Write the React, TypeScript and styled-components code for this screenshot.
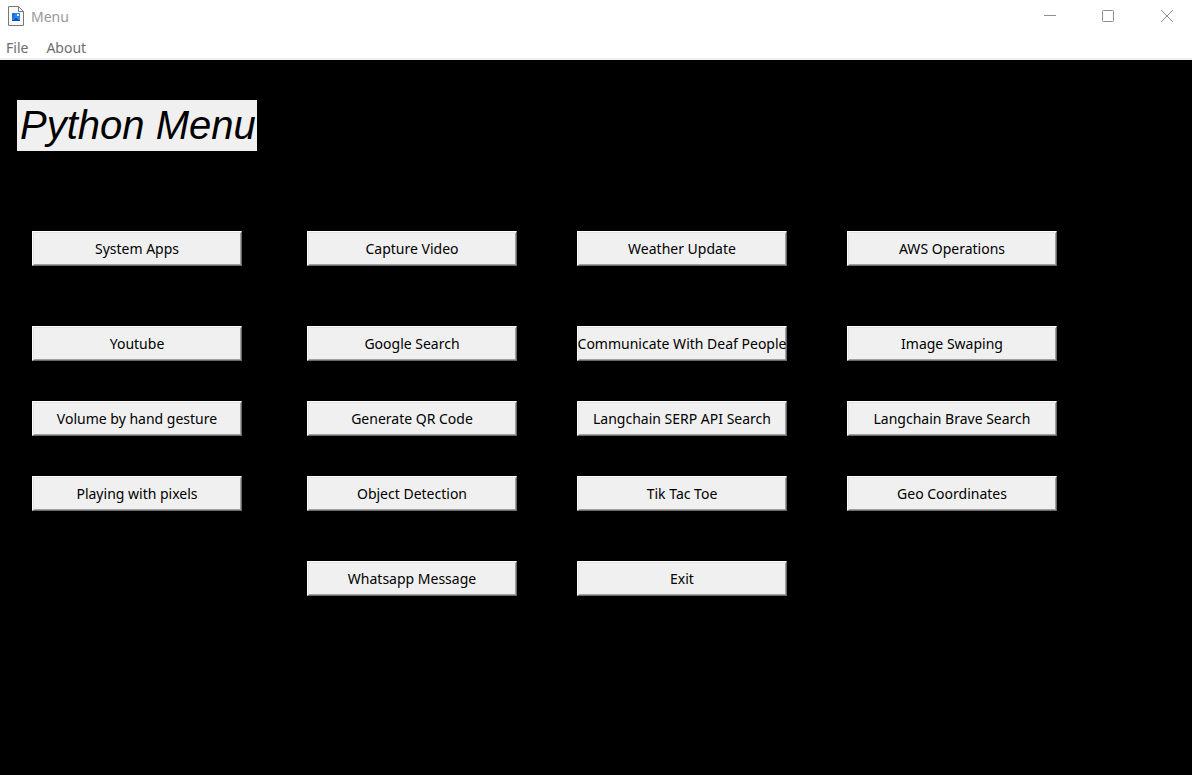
import React from "react";
import styled, { createGlobalStyle } from "styled-components";

const GlobalStyle = createGlobalStyle`
  *, *::before, *::after { box-sizing: border-box; }
  body { margin: 0; background: #000; }
`;

const Window = styled.div`
  display: flex;
  flex-direction: column;
  min-height: 100vh;
  background: #000;
  color: #000;
  font-family: "Noto Sans", "Open Sans", sans-serif;
  font-size: 14px;
`;

const TitleBar = styled.header`
  display: flex;
  align-items: flex-start;
  height: 33px;
  padding-left: 8px;
  background: #fff;
  color: #999;

  > svg {
    margin-top: 6px;
  }
`;

const WindowTitle = styled.span`
  flex: 1;
  margin: 7px 0 0 7px;
  line-height: 20px;
`;

const WindowButton = styled.button`
  display: grid;
  place-items: center;
  width: 58px;
  height: 32px;
  padding: 0;
  border: 0;
  background: transparent;
  color: #8f8f8f;

  &:last-child {
    width: 55px;
    padding-left: 5px;
  }
`;

const MenuBar = styled.nav`
  display: flex;
  gap: 18px;
  height: 27px;
  padding: 5px 6px 0;
  border-bottom: 2px solid #f0f0f0;
  background: #fff;
`;

const MenuItem = styled.button`
  padding: 0;
  border: 0;
  background: transparent;
  color: #6d6d6d;
  font: inherit;
  line-height: 20px;
`;

const Content = styled.main`
  flex: 1;
  padding: 40px 17px;
`;

const Heading = styled.h1`
  width: fit-content;
  margin: 0 0 80px;
  padding: 2px 1px 2px 3px;
  background: #f0f0f0;
  font: italic 40px/47px "Liberation Sans", Arial, sans-serif;
  white-space: nowrap;
`;

const ActionGrid = styled.div`
  display: grid;
  grid-template-columns: 275px 270px 270px 210px;
  grid-template-rows: 95px 75px 75px 85px 35px;
  align-items: start;
  padding-left: 15px;
`;

const ActionButton = styled.button<{ $column?: number }>`
  display: flex;
  align-items: center;
  justify-content: center;
  grid-column: ${({ $column }) => $column ?? "auto"};
  width: 210px;
  height: 35px;
  padding: 0;
  overflow: hidden;
  border: 1px solid;
  border-color: #fff #696969 #696969 #fff;
  background: #f0f0f0;
  box-shadow: inset 1px 1px #e3e3e3, inset -1px -1px #a0a0a0;
  color: #000;
  font: inherit;
  line-height: 20px;
  white-space: nowrap;
`;

const actions: { label: string; column?: number }[] = [
  { label: "System Apps" },
  { label: "Capture Video" },
  { label: "Weather Update" },
  { label: "AWS Operations" },
  { label: "Youtube" },
  { label: "Google Search" },
  { label: "Communicate With Deaf People" },
  { label: "Image Swaping" },
  { label: "Volume by hand gesture" },
  { label: "Generate QR Code" },
  { label: "Langchain SERP API Search" },
  { label: "Langchain Brave Search" },
  { label: "Playing with pixels" },
  { label: "Object Detection" },
  { label: "Tik Tac Toe" },
  { label: "Geo Coordinates" },
  { label: "Whatsapp Message", column: 2 },
  { label: "Exit", column: 3 },
];

const AppIcon = () => (
  <svg width="16" height="20" viewBox="0 0 16 20" aria-hidden="true">
    <path d="M.5.5h10l5 5v14H.5z" fill="#fafafa" stroke="#7a7672" />
    <path d="M10.5.5v5h5" fill="none" stroke="#7a7672" />
    <path d="M4 7h8v8H4z" fill="#2a86e8" />
    <path d="M4 7h3v8H4z" fill="#1f6fdc" />
    <path d="M4 15v-1l4-4 4 4v1z" fill="#0f50b8" />
    <path d="M4.500 14l3.500-3.500 3.500 3.500" fill="none" stroke="#49b4f4" />
    <path d="M9 8h2v2H9z" fill="#d4ecff" />
  </svg>
);

export default function App() {
  return (
    <>
      <GlobalStyle />
      <Window>
        <TitleBar>
          <AppIcon />
          <WindowTitle>Menu</WindowTitle>
          <WindowButton aria-label="Minimize">
            <svg width="12" height="12" viewBox="0 0 12 12">
              <path d="M0 5.5h12" stroke="currentColor" />
            </svg>
          </WindowButton>
          <WindowButton aria-label="Maximize">
            <svg width="12" height="12" viewBox="0 0 12 12">
              <rect x=".5" y=".5" width="11" height="11" rx="1" fill="none" stroke="currentColor" />
            </svg>
          </WindowButton>
          <WindowButton aria-label="Close">
            <svg width="12" height="12" viewBox="0 0 12 12">
              <path d="M0 0l12 12M12 0L0 12" stroke="currentColor" />
            </svg>
          </WindowButton>
        </TitleBar>
        <MenuBar>
          <MenuItem>File</MenuItem>
          <MenuItem>About</MenuItem>
        </MenuBar>
        <Content>
          <Heading>Python Menu</Heading>
          <ActionGrid>
            {actions.map(({ label, column }) => (
              <ActionButton key={label} $column={column}>
                {label}
              </ActionButton>
            ))}
          </ActionGrid>
        </Content>
      </Window>
    </>
  );
}
